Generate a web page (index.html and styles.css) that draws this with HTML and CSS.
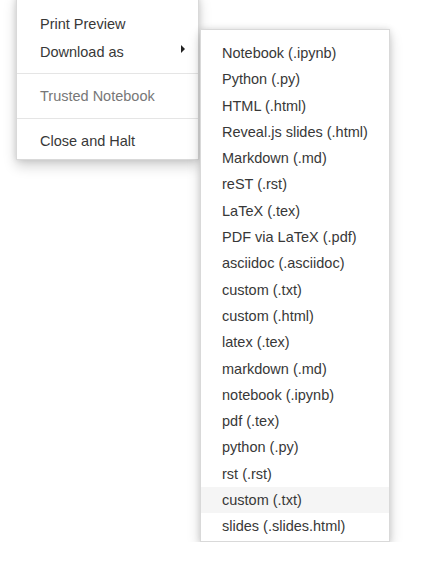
FILE: index.html
```
<!DOCTYPE html>
<html>
<head>
<meta charset="utf-8">
<link rel="stylesheet" href="styles.css">
</head>
<body>
<div class="stage">
  <ul class="menu main-menu">
    <li class="item">Print Preview</li>
    <li class="item has-sub">Download as <span class="caret"></span></li>
    <li class="divider first-divider"></li>
    <li class="item disabled">Trusted Notebook</li>
    <li class="divider"></li>
    <li class="item">Close and Halt</li>
  </ul>
  <ul class="menu sub-menu">
    <li class="item">Notebook (.ipynb)</li>
    <li class="item">Python (.py)</li>
    <li class="item">HTML (.html)</li>
    <li class="item">Reveal.js slides (.html)</li>
    <li class="item">Markdown (.md)</li>
    <li class="item">reST (.rst)</li>
    <li class="item">LaTeX (.tex)</li>
    <li class="item">PDF via LaTeX (.pdf)</li>
    <li class="item">asciidoc (.asciidoc)</li>
    <li class="item">custom (.txt)</li>
    <li class="item">custom (.html)</li>
    <li class="item">latex (.tex)</li>
    <li class="item">markdown (.md)</li>
    <li class="item">notebook (.ipynb)</li>
    <li class="item">pdf (.tex)</li>
    <li class="item">python (.py)</li>
    <li class="item">rst (.rst)</li>
    <li class="item hover">custom (.txt)</li>
    <li class="item">slides (.slides.html)</li>
  </ul>
</div>
</body>
</html>
```
FILE: styles.css
```
html, body {
  margin: 0;
  padding: 0;
  background: #fff;
  overflow: hidden;
}
body {
  font-family: "Liberation Sans", Arial, sans-serif;
  font-size: 14.5px;
  color: #383838;
}
.stage {
  display: flex;
  align-items: flex-start;
  padding-left: 16px;
}
.menu {
  list-style: none;
  margin: 0;
  background: #fff;
  border: 1px solid rgba(0, 0, 0, 0.15);
  box-shadow: 0 6px 12px rgba(0, 0, 0, 0.18), 0 0 6px rgba(0, 0, 0, 0.12);
}
.main-menu {
  width: 183px;
  box-sizing: border-box;
  margin-top: -6px;
  padding: 16px 0 5px 0;
  position: relative;
  z-index: 1;
}
.sub-menu {
  width: 190px;
  box-sizing: border-box;
  margin-top: 29px;
  margin-left: 1px;
  padding: 10px 0 1px 0;
  position: relative;
  z-index: 2;
}
.item {
  line-height: 26.3px;
  white-space: nowrap;
}
.main-menu .item {
  padding: 0 13px 0 23px;
}
.sub-menu .item {
  padding: 0 10px 0 21px;
}
.has-sub {
  display: flex;
  align-items: center;
  justify-content: space-between;
  margin-top: 1.7px;
}
.caret {
  width: 0;
  height: 0;
  border-top: 4px solid transparent;
  border-bottom: 4px solid transparent;
  border-left: 4px solid #222;
  margin-top: -7px;
}
.disabled {
  color: #777;
}
.divider {
  height: 1px;
  margin: 9px 0;
  background: #e5e5e5;
}
.first-divider {
  margin-top: 7.5px;
}
.hover {
  background: #f5f5f5;
}
```
